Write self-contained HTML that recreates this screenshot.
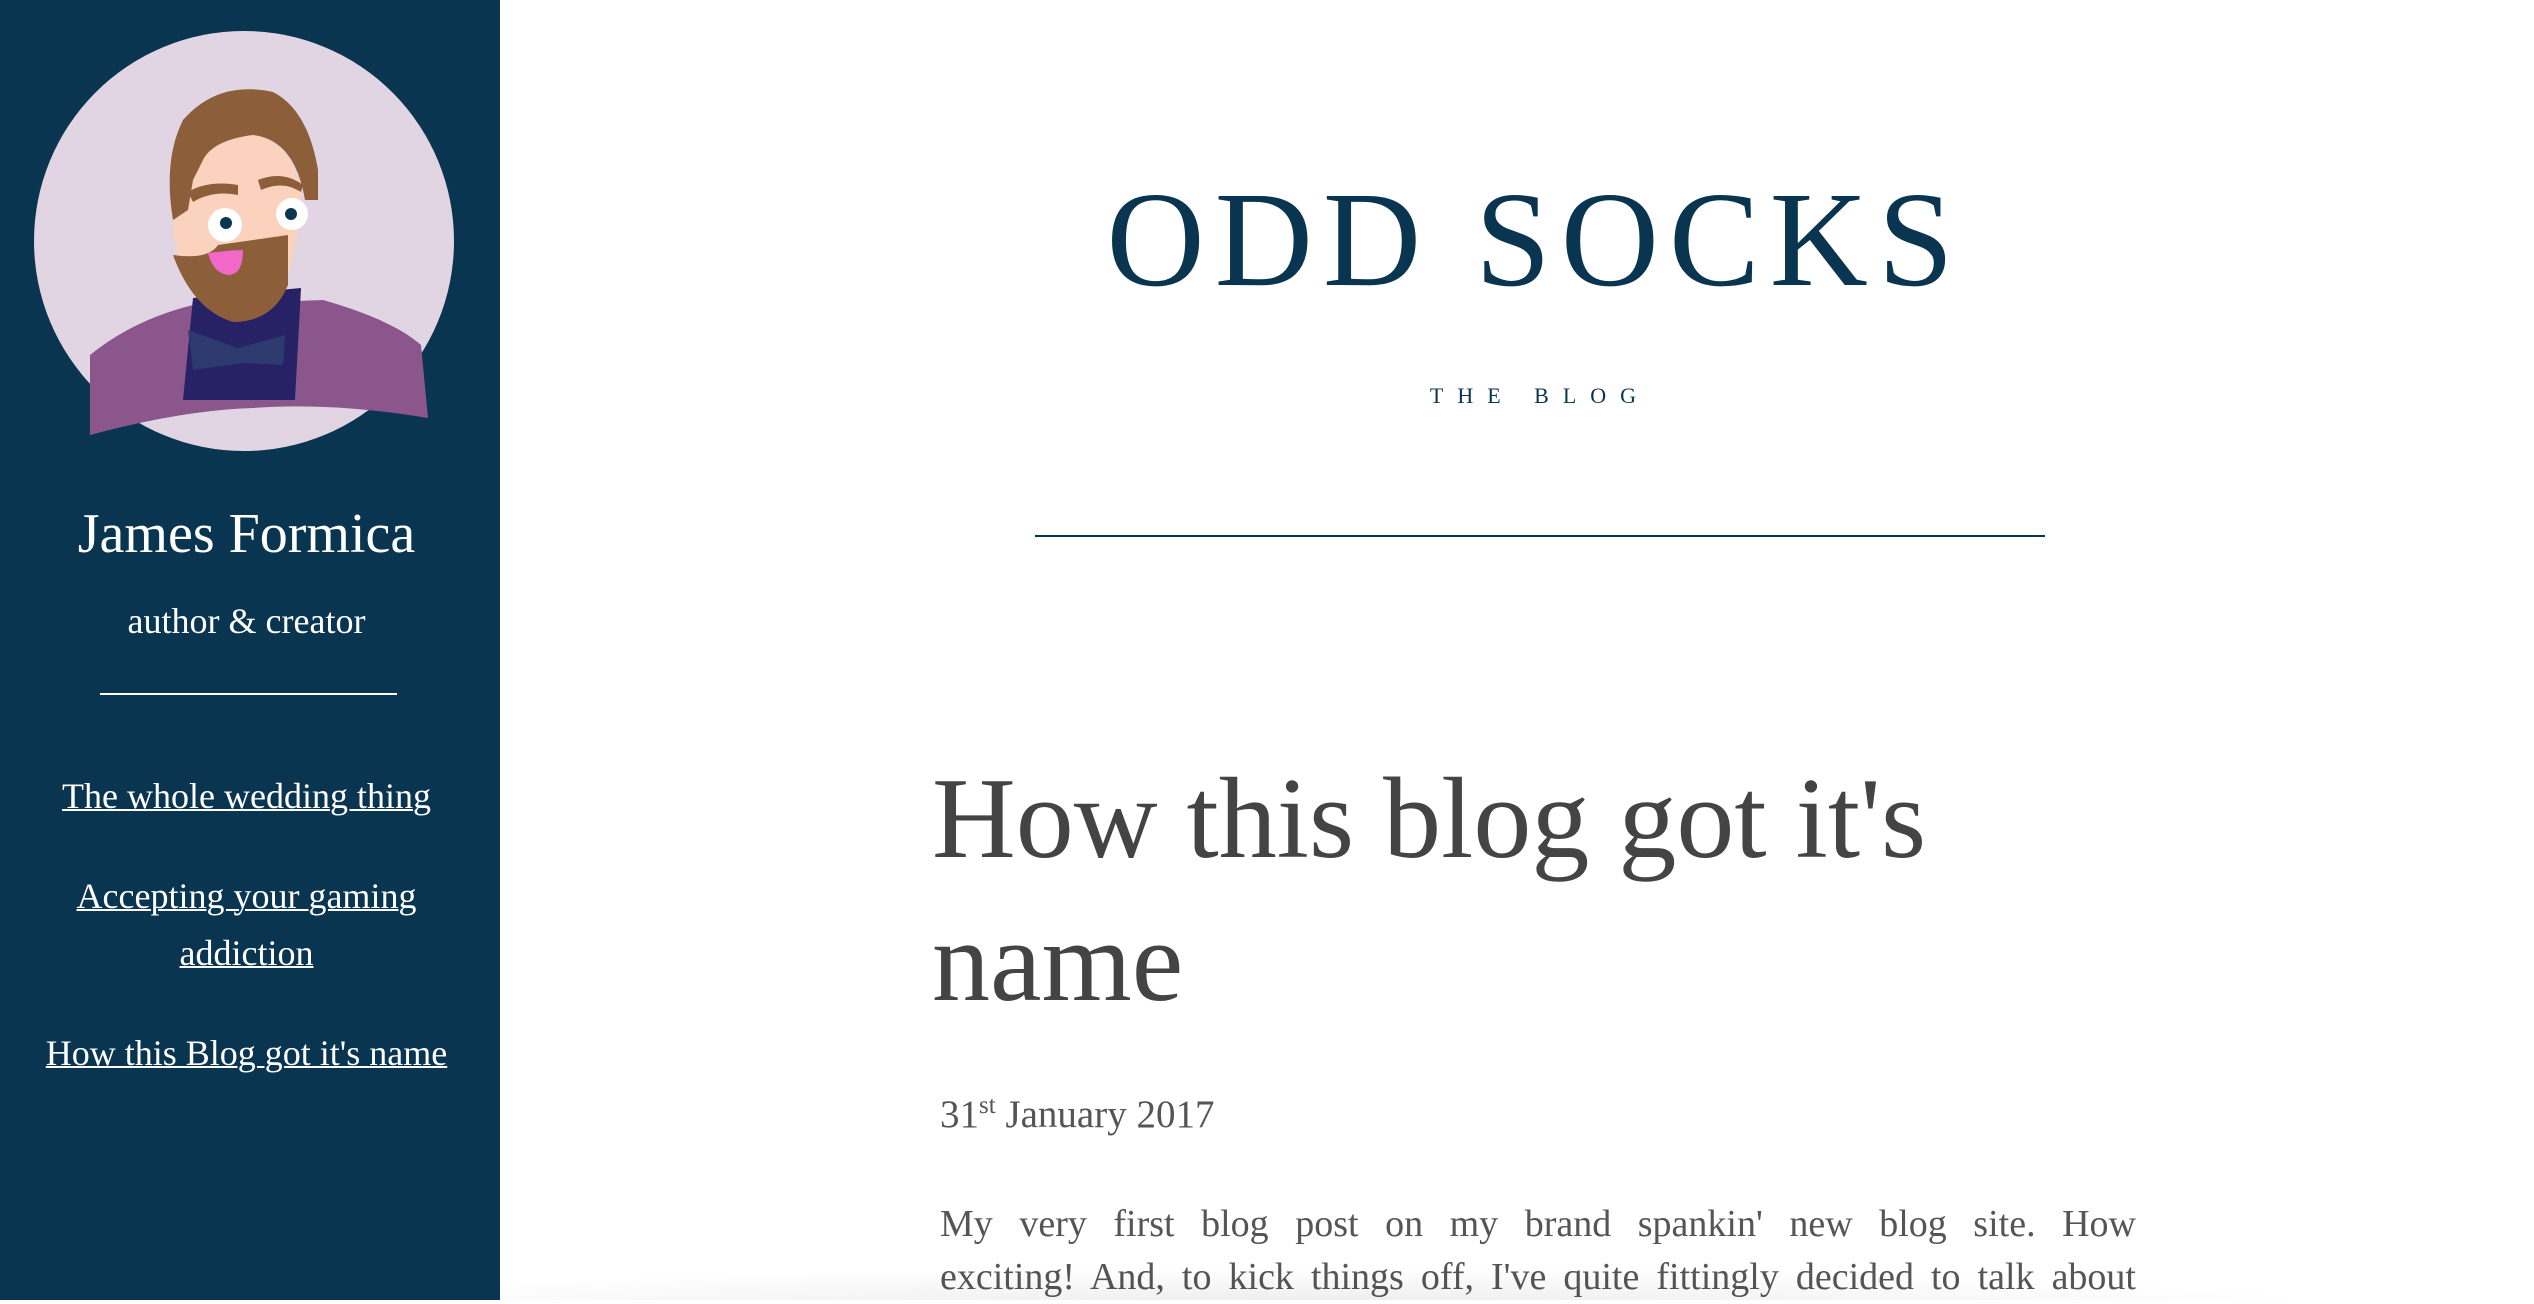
<!DOCTYPE html>
<html><head><meta charset="utf-8"><style>
html,body{margin:0;padding:0;width:2534px;height:1300px;overflow:hidden;background:#fff;font-family:"Liberation Serif",serif}
.side{position:absolute;left:0;top:0;width:500px;height:1300px;background:#0a3550;color:#fff;text-align:center}
.av{position:absolute;left:33px;top:30px}
.name{position:absolute;left:0;width:493px;top:502px;font-size:56px;line-height:64px}
.role{position:absolute;left:0;width:493px;top:600px;font-size:36px;line-height:42px}
.div{position:absolute;left:100px;width:297px;top:693px;height:2px;background:#fff}
.links{position:absolute;left:25px;width:443px;top:768px;font-size:36px;line-height:57px}
.links a{color:#fff;text-decoration:underline;text-decoration-thickness:2px;display:block;margin-bottom:43px}
.title{position:absolute;left:1025px;width:1010px;top:160px;text-align:center;color:#0a3550;font-size:136px;letter-spacing:10px;line-height:160px;text-indent:10px}
.sub{position:absolute;left:1035px;width:1010px;top:383px;text-align:center;color:#0a3550;font-size:22px;letter-spacing:14px}
.hr{position:absolute;left:1035px;width:1010px;top:535px;height:2px;background:#0a3550}
h1{position:absolute;left:932px;top:748px;width:1190px;margin:0;font-weight:normal;font-size:116px;line-height:143px;color:#444}
.date{position:absolute;left:940px;top:1092px;font-size:39px;color:#555}
.date sup{font-size:25px}
.p{position:absolute;left:940px;width:1196px;top:1198px;font-size:38px;line-height:53px;color:#555}
.p div{text-align:justify;text-align-last:justify;white-space:nowrap}
.shade{position:absolute;left:500px;right:0;bottom:0;height:40px;background:radial-gradient(ellipse at 40% 120%,rgba(0,0,0,.08),rgba(0,0,0,0) 60%)}
</style></head><body>
<div class="side">
<svg class="av" width="422" height="422" viewBox="0 0 422 422">
<circle cx="211" cy="211" r="210" fill="#e1d5e3"/>
<path d="M57 325 Q100 290 160 275 L290 270 Q360 290 388 315 L395 388 Q300 372 220 378 Q150 380 57 405 Z" fill="#8a568c"/>
<path d="M160 268 L268 258 L262 370 L150 370 Z" fill="#262265"/>
<path d="M155 300 L205 318 L252 305 L250 335 L210 333 L160 340 Z" fill="#2c3a70"/>
<path d="M140 195 Q145 265 200 290 Q250 285 260 225 L270 175 Q265 110 210 100 Q150 105 140 150 Z" fill="#fbd2bd"/>
<path d="M140 190 Q130 130 150 90 Q185 50 240 62 Q275 80 285 140 L285 170 L272 170 Q262 110 220 105 Q180 110 170 130 L160 150 L155 180 Z" fill="#8c5e3a"/>
<path d="M140 225 Q175 230 185 215 Q220 210 255 205 L255 255 Q240 292 200 292 Q160 280 140 225 Z" fill="#8c5e3a"/>
<path d="M175 223 Q200 220 210 220 Q210 245 195 245 Q180 243 175 223 Z" fill="#f268c8"/>
<path d="M155 162 Q175 150 205 155 L205 165 Q180 160 160 172 Z M225 150 Q250 140 270 155 L268 162 Q250 150 228 160 Z" fill="#8c5e3a"/>
<circle cx="192" cy="195" r="17" fill="#fff"/><circle cx="193" cy="193" r="6" fill="#0a3550"/>
<circle cx="259" cy="184" r="16" fill="#fff"/><circle cx="258" cy="184" r="6" fill="#0a3550"/>
</svg>
<div class="name">James Formica</div>
<div class="role">author &amp; creator</div>
<div class="div"></div>
<div class="links">
<a>The whole wedding thing</a>
<a>Accepting your gaming<br>addiction</a>
<a>How this Blog got it's name</a>
</div>
</div>
<div class="title">ODD SOCKS</div>
<div class="sub">THE BLOG</div>
<div class="hr"></div>
<h1>How this blog got it's<br>name</h1>
<div class="date">31<sup>st</sup> January 2017</div>
<div class="p"><div>My very first blog post on my brand spankin' new blog site. How</div><div>exciting! And, to kick things off, I've quite fittingly decided to talk about</div></div>
<div class="shade"></div>
</body></html>
